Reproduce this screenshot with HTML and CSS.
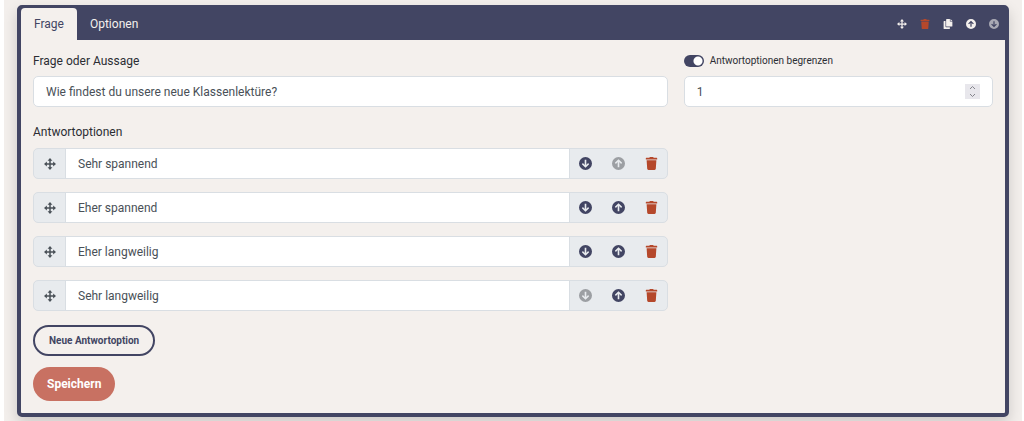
FILE: index.html
```
<!DOCTYPE html>
<html lang="de">
<head>
  <meta charset="UTF-8">
  <title>Frage bearbeiten</title>
  <meta name="viewport" content="width=device-width, initial-scale=1.0">
  <link rel="stylesheet" href="styles.css">
</head>
<body>

<svg class="sprite" aria-hidden="true">
  <symbol id="move" viewBox="0 0 16 16">
    <path d="M8 2v12M2 8h12" stroke="currentColor" stroke-width="2" fill="none"/>
    <path d="M8 0l3.200 3.800H4.800zM8 16l3.200-3.800H4.800zM0 8l3.800-3.200v6.400zM16 8l-3.800-3.200v6.400z" fill="currentColor"/>
  </symbol>
  <symbol id="trash" viewBox="0 0 14 16">
    <path d="M.5 1h3.800L5 0h4l.7 1h3.800a.5.5 0 0 1 .5.5V3H0V1.500a.5.5 0 0 1 .5-.5zM1 4h12l-.7 10.600A1.500 1.500 0 0 1 10.800 16H3.200a1.500 1.500 0 0 1-1.500-1.400z" fill="currentColor"/>
  </symbol>
  <symbol id="copy" viewBox="0 0 16 16">
    <path d="M6 0h5v4h4v7a1 1 0 0 1-1 1H6a1 1 0 0 1-1-1V1a1 1 0 0 1 1-1zM12 0l3 3h-3z" fill="currentColor"/>
    <path d="M4 3H2a1 1 0 0 0-1 1v11a1 1 0 0 0 1 1h8a1 1 0 0 0 1-1v-2H5a1 1 0 0 1-1-1z" fill="currentColor"/>
  </symbol>
  <symbol id="up" viewBox="0 0 16 16">
    <path fill-rule="evenodd" d="M8 0a8 8 0 1 0 0 16A8 8 0 0 0 8 0zM7 12.500V6.300L4.800 8.500 3.500 7.200 8 2.700l4.500 4.500-1.300 1.300L9 6.300v6.200z" fill="currentColor"/>
  </symbol>
  <symbol id="down" viewBox="0 0 16 16">
    <path fill-rule="evenodd" d="M8 0a8 8 0 1 0 0 16A8 8 0 0 0 8 0zM7 3.500v6.200L4.800 7.500 3.500 8.800 8 13.300l4.500-4.500-1.300-1.300L9 9.700V3.500z" fill="currentColor"/>
  </symbol>
</svg>

<main class="page">
  <form class="card">
    <header class="card-header">
      <nav class="tabs">
        <a class="tab active" href="#frage">Frage</a>
        <a class="tab" href="#optionen">Optionen</a>
      </nav>
      <div class="tools">
        <button class="tool" type="button" aria-label="Verschieben"><svg><use href="#move"/></svg></button>
        <button class="tool danger" type="button" aria-label="Löschen"><svg><use href="#trash"/></svg></button>
        <button class="tool" type="button" aria-label="Kopieren"><svg><use href="#copy"/></svg></button>
        <button class="tool" type="button" aria-label="Nach oben"><svg><use href="#up"/></svg></button>
        <button class="tool" type="button" aria-label="Nach unten" disabled><svg><use href="#down"/></svg></button>
      </div>
    </header>

    <div class="card-body" id="frage">
      <div class="col-main">
        <label class="label" for="question">Frage oder Aussage</label>
        <input class="input" id="question" type="text" value="Wie findest du unsere neue Klassenlektüre?">
      </div>
      <div class="col-side">
        <label class="switch-label" for="limit">
          <input class="switch" id="limit" type="checkbox" checked>
          Antwortoptionen begrenzen
        </label>
        <div class="number">
          <input class="input" type="number" value="1" aria-label="Anzahl">
          <svg class="spinner" viewBox="0 0 15 15"><path d="M5 5l2.500-2.500L10 5M5 10l2.500 2.500L10 10"/></svg>
        </div>
      </div>

      <fieldset class="col-main answers">
        <legend class="label">Antwortoptionen</legend>
        <div class="answer">
          <button class="handle" type="button" aria-label="Verschieben"><svg><use href="#move"/></svg></button>
          <input class="answer-text" type="text" value="Sehr spannend" aria-label="Antwort 1">
          <div class="actions">
            <button class="action" type="button" aria-label="Nach unten"><svg><use href="#down"/></svg></button>
            <button class="action" type="button" aria-label="Nach oben" disabled><svg><use href="#up"/></svg></button>
            <button class="action danger" type="button" aria-label="Löschen"><svg><use href="#trash"/></svg></button>
          </div>
        </div>
        <div class="answer">
          <button class="handle" type="button" aria-label="Verschieben"><svg><use href="#move"/></svg></button>
          <input class="answer-text" type="text" value="Eher spannend" aria-label="Antwort 2">
          <div class="actions">
            <button class="action" type="button" aria-label="Nach unten"><svg><use href="#down"/></svg></button>
            <button class="action" type="button" aria-label="Nach oben"><svg><use href="#up"/></svg></button>
            <button class="action danger" type="button" aria-label="Löschen"><svg><use href="#trash"/></svg></button>
          </div>
        </div>
        <div class="answer">
          <button class="handle" type="button" aria-label="Verschieben"><svg><use href="#move"/></svg></button>
          <input class="answer-text" type="text" value="Eher langweilig" aria-label="Antwort 3">
          <div class="actions">
            <button class="action" type="button" aria-label="Nach unten"><svg><use href="#down"/></svg></button>
            <button class="action" type="button" aria-label="Nach oben"><svg><use href="#up"/></svg></button>
            <button class="action danger" type="button" aria-label="Löschen"><svg><use href="#trash"/></svg></button>
          </div>
        </div>
        <div class="answer">
          <button class="handle" type="button" aria-label="Verschieben"><svg><use href="#move"/></svg></button>
          <input class="answer-text" type="text" value="Sehr langweilig" aria-label="Antwort 4">
          <div class="actions">
            <button class="action" type="button" aria-label="Nach unten" disabled><svg><use href="#down"/></svg></button>
            <button class="action" type="button" aria-label="Nach oben"><svg><use href="#up"/></svg></button>
            <button class="action danger" type="button" aria-label="Löschen"><svg><use href="#trash"/></svg></button>
          </div>
        </div>
      </fieldset>

      <div class="buttons">
        <button class="btn btn-outline" type="button">Neue Antwortoption</button>
        <button class="btn btn-save" type="submit">Speichern</button>
      </div>
    </div>
  </form>
</main>

</body>
</html>
```
FILE: styles.css
```
* {
  box-sizing: border-box;
}

body {
  margin: 0;
  background: #fff;
  font-family: Roboto, "Liberation Sans", sans-serif;
  font-size: 12px;
  line-height: 16px;
  color: #2b2d33;
}

button, input {
  font: inherit;
}

button {
  padding: 0;
  border: none;
  background: none;
  cursor: pointer;
}

.sprite {
  display: none;
}

.page {
  min-height: 100vh;
  margin: 0 2px 0 4px;
  padding: 5px 13px 4px;
  background: #f3efec;
  overflow: hidden;
}

.card {
  border: 4px solid #424563;
  border-top-width: 3px;
  border-radius: 5px;
  background: #f4f0ed;
  box-shadow: 0 6px 14px rgba(0, 0, 0, 0.16);
}

.card-header {
  display: flex;
  justify-content: space-between;
  align-items: center;
  background: #424563;
  padding-right: 6px;
}

.tabs {
  display: flex;
}

.tab {
  padding: 8px 13px;
  border-radius: 4px 4px 0 0;
  color: #f4f0ed;
  text-decoration: none;
}

.tab.active {
  background: #f4f0ed;
  color: #424563;
}

.tools {
  display: flex;
  gap: 13px;
}

.tool {
  display: flex;
  color: #f4f0ed;
}

.tool svg {
  width: 10px;
  height: 10px;
}

.danger {
  color: #b5482b;
}

.tool:disabled {
  color: #a9a9b4;
}

.card-body {
  display: grid;
  grid-template-columns: repeat(12, 1fr);
  column-gap: 16px;
  row-gap: 14px;
  padding: 13px 12px 12px;
}

.col-main {
  grid-column: span 8;
}

.col-side {
  grid-column: span 4;
}

.label {
  display: block;
  margin-bottom: 7px;
  padding: 0;
}

.input {
  display: block;
  width: 100%;
  height: 31px;
  padding: 0 12px;
  border: 1px solid #d9dee3;
  border-radius: 5px;
  background: #fff;
  color: #495057;
}

.switch-label {
  display: flex;
  align-items: center;
  gap: 6px;
  margin-bottom: 8px;
  font-size: 10px;
  line-height: 15px;
}

.switch {
  appearance: none;
  width: 20px;
  height: 12px;
  margin: 0;
  border-radius: 6px;
  background: radial-gradient(circle at 14px 6px, #fff 4px, #424563 5px);
}

.number {
  position: relative;
}

.number .input {
  appearance: textfield;
}

.number .input::-webkit-inner-spin-button {
  display: none;
}

.spinner {
  position: absolute;
  top: 8px;
  right: 13px;
  width: 15px;
  height: 15px;
  background: #e8e7ec;
  fill: none;
  stroke: #85858c;
  pointer-events: none;
}

.answers {
  display: flex;
  flex-direction: column;
  gap: 13px;
  min-width: 0;
  margin: 3px 0 0;
  padding: 0;
  border: none;
}

.answers .label {
  margin-bottom: 8px;
}

.answer {
  display: flex;
  height: 31px;
  border: 1px solid #d9dee3;
  border-radius: 5px;
  background: #e8ebee;
  overflow: hidden;
}

.handle {
  display: flex;
  align-items: center;
  justify-content: center;
  width: 31px;
  color: #495057;
}

.handle svg {
  width: 12px;
  height: 12px;
}

.answer-text {
  flex: 1;
  min-width: 0;
  padding: 0 12px;
  border: solid #d9dee3;
  border-width: 0 1px;
  background: #fff;
  color: #495057;
}

.actions {
  display: flex;
  align-items: center;
  gap: 20px;
  padding: 0 9px;
}

.action {
  display: flex;
  color: #424563;
}

.action.danger {
  color: #b5482b;
}

.action:disabled {
  color: #9c9fa3;
}

.action svg {
  width: 13px;
  height: 13px;
}

.buttons {
  grid-column: 1 / -1;
  display: flex;
  flex-direction: column;
  align-items: flex-start;
  gap: 11px;
}

.btn {
  border-radius: 17px;
  font-weight: bold;
}

.btn-outline {
  padding: 6px 14px;
  border: 2px solid #424563;
  color: #424563;
  font-size: 10px;
  line-height: 15px;
}

.btn-save {
  padding: 9px 14px;
  background: #c87162;
  color: #fff;
}
```
